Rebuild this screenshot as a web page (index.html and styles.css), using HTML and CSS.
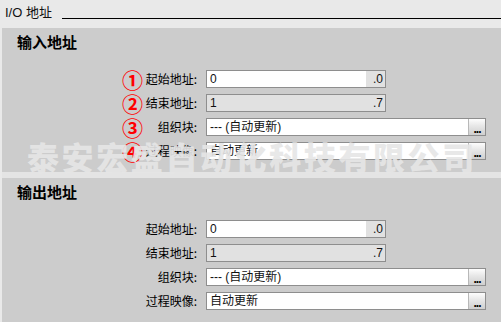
FILE: index.html
```html
<!DOCTYPE html>
<html lang="zh-CN">
<head>
    <meta charset="UTF-8">
    <meta name="viewport" content="width=device-width, initial-scale=1.0">
    <title>I/O 地址</title>
    <link rel="stylesheet" href="styles.css">
</head>
<body>
    <div class="header">
        <span class="header-title">I/O 地址</span>
        <div class="header-line"></div>
    </div>

    <div class="panel">
        <div class="section">
            <div class="section-title">输入地址</div>
            <div class="rows">
                <div class="row">
                    <span class="mark">①</span>
                    <label class="row-label">起始地址:</label>
                    <div class="field field-short">
                        <span class="field-value">0</span>
                        <span class="field-bit">.0</span>
                    </div>
                </div>
                <div class="row">
                    <span class="mark">②</span>
                    <label class="row-label">结束地址:</label>
                    <div class="field field-short field-disabled">
                        <span class="field-value">1</span>
                        <span class="field-bit">.7</span>
                    </div>
                </div>
                <div class="row">
                    <span class="mark">③</span>
                    <label class="row-label">组织块:</label>
                    <div class="field field-long">
                        <span class="field-value">--- (自动更新)</span>
                        <span class="field-btn">...</span>
                    </div>
                </div>
                <div class="row">
                    <span class="mark">④</span>
                    <label class="row-label">过程映像:</label>
                    <div class="field field-long">
                        <span class="field-value">自动更新</span>
                        <span class="field-btn">...</span>
                    </div>
                </div>
            </div>
        </div>

        <div class="divider"></div>

        <div class="section">
            <div class="section-title">输出地址</div>
            <div class="rows">
                <div class="row">
                    <span class="mark"></span>
                    <label class="row-label">起始地址:</label>
                    <div class="field field-short">
                        <span class="field-value">0</span>
                        <span class="field-bit">.0</span>
                    </div>
                </div>
                <div class="row">
                    <span class="mark"></span>
                    <label class="row-label">结束地址:</label>
                    <div class="field field-short field-disabled">
                        <span class="field-value">1</span>
                        <span class="field-bit">.7</span>
                    </div>
                </div>
                <div class="row">
                    <span class="mark"></span>
                    <label class="row-label">组织块:</label>
                    <div class="field field-long">
                        <span class="field-value">--- (自动更新)</span>
                        <span class="field-btn">...</span>
                    </div>
                </div>
                <div class="row">
                    <span class="mark"></span>
                    <label class="row-label">过程映像:</label>
                    <div class="field field-long">
                        <span class="field-value">自动更新</span>
                        <span class="field-btn">...</span>
                    </div>
                </div>
            </div>
        </div>

        <div class="watermark">泰安宏盛自动化科技有限公司</div>
    </div>
</body>
</html>
```

FILE: styles.css
```css
body {
    margin: 0;
    width: 501px;
    height: 322px;
    overflow: hidden;
    background-color: #e9e9e9;
    font-family: "Liberation Sans", "Noto Sans CJK SC", sans-serif;
    font-size: 12px;
    color: #000;
}
.header {
    display: flex;
    align-items: flex-start;
    height: 28px;
}
.header-title {
    padding: 5px 0 0 5px;
    line-height: 16px;
    font-size: 13px;
    color: #111;
}
.header-line {
    flex: 1;
    height: 1px;
    margin: 18px 0 0 10px;
    background-color: #000;
}
.panel {
    position: relative;
    margin-left: 2px;
    height: 294px;
    background-color: #cccccc;
}
.section {
    padding: 4px 0 12px 0;
}
.section-title {
    padding-left: 15px;
    line-height: 20px;
    font-size: 15px;
    font-weight: bold;
    font-family: "Noto Sans CJK SC", sans-serif;
}
.rows {
    display: flex;
    flex-direction: column;
    gap: 6px;
    margin-top: 18px;
}
.row {
    display: grid;
    grid-template-columns: 120px 21px 54px auto;
    align-items: center;
    height: 18px;
}
.mark {
    grid-column: 2;
    color: #ff0000;
    font-family: "Noto Sans CJK SC", sans-serif;
    font-weight: bold;
    font-size: 21px;
    line-height: 18px;
    text-align: center;
}
.row-label {
    grid-column: 3;
    text-align: right;
    font-family: "Noto Sans CJK SC", sans-serif;
    font-size: 12px;
    line-height: 18px;
    white-space: nowrap;
}
.field {
    grid-column: 4;
    display: flex;
    height: 18px;
    margin-left: 9px;
    border: 1px solid #8e8e8e;
    box-sizing: border-box;
    background-color: #fff;
    font-family: "Liberation Sans", "Noto Sans CJK SC", sans-serif;
    font-size: 12px;
    line-height: 16px;
}
.field-short {
    width: 180px;
}
.field-long {
    width: 280px;
}
.field-disabled {
    background-color: #e1e1e1;
}
.field-value {
    flex: 1;
    padding-left: 3px;
    white-space: nowrap;
    color: #111;
}
.field-bit {
    width: 17px;
    padding-right: 2px;
    text-align: right;
    background-color: #e1e1e1;
    color: #111;
}
.field-btn {
    width: 16px;
    border-left: 1px solid #b8b8b8;
    background: linear-gradient(#fdfdfd, #e6e6e6 45%, #cfcfcf);
    font-weight: bold;
    font-size: 12px;
    line-height: 21px;
    text-align: center;
    letter-spacing: -1px;
    overflow: hidden;
}
.divider {
    height: 6px;
    background-color: #e4e4e4;
}
.watermark {
    position: absolute;
    left: 25px;
    top: 108px;
    font-family: "Noto Sans CJK SC", sans-serif;
    font-weight: 900;
    font-size: 32px;
    line-height: 40px;
    letter-spacing: 2.6px;
    color: rgba(230, 230, 230, 0.92);
    white-space: nowrap;
    pointer-events: none;
}
```
